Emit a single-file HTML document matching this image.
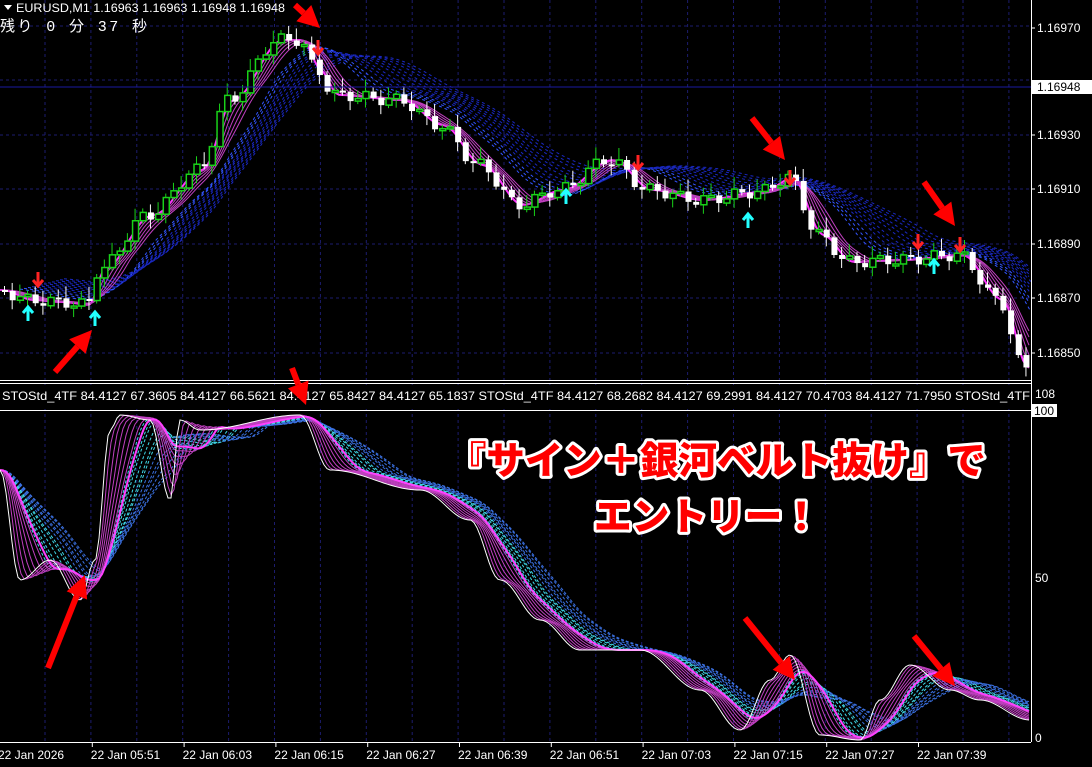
<!DOCTYPE html>
<html><head><meta charset="utf-8">
<style>
html,body{margin:0;padding:0;background:#000;}
svg{display:block}
.ax{font-family:"Liberation Sans",sans-serif;font-size:12px;fill:#fff}
.big{font-family:"Liberation Sans","Noto Sans CJK JP",sans-serif;font-weight:900;font-size:38px;fill:#f00;stroke:#fff;stroke-width:6px;paint-order:stroke;stroke-linejoin:round}
</style></head>
<body>
<svg id="s" width="1092" height="767" xmlns="http://www.w3.org/2000/svg">
<rect width="1092" height="767" fill="#000"/>
<g id="grid" stroke="#1c1c6e" stroke-dasharray="3,3" stroke-width="1"></g>
<g id="top"></g>
<g id="bot"></g>
<line x1="0" y1="87" x2="1031" y2="87" stroke="#1a1aa0" stroke-width="1"/>
<line x1="0" y1="380.5" x2="1031" y2="380.5" stroke="#fff"/>
<line x1="0" y1="383.5" x2="1031" y2="383.5" stroke="#fff"/>
<line x1="0" y1="410.5" x2="1031" y2="410.5" stroke="#fff"/>
<line x1="0" y1="742.5" x2="1031" y2="742.5" stroke="#fff"/>
<line x1="1031.5" y1="0" x2="1031.5" y2="742" stroke="#fff"/>
<g id="ticks" stroke="#fff"></g>
<polygon points="4,5 12,5 8,10" fill="#fff"/>
<text class="ax" x="16" y="12" font-size="13" textLength="269" lengthAdjust="spacingAndGlyphs">EURUSD,M1  1.16963 1.16963 1.16948 1.16948</text>
<text x="0" y="31" fill="#fff" font-size="15" font-family="'Liberation Mono','Noto Sans CJK JP',monospace" textLength="147" lengthAdjust="spacing">残り 0 分 37 秒</text>
<rect x="0" y="385" width="1031" height="24" fill="#000"/>
<text class="ax" x="2" y="400" font-size="13" textLength="1028" lengthAdjust="spacingAndGlyphs">STOStd_4TF 84.4127 67.3605 84.4127 66.5621 84.4127 65.8427 84.4127 65.1837   STOStd_4TF 84.4127 68.2682 84.4127 69.2991 84.4127 70.4703 84.4127 71.7950   STOStd_4TF</text>
<rect x="1032" y="384" width="60" height="26" fill="#000"/>
<text class="ax" x="1035" y="398">108</text>
<rect x="1032" y="404" width="25" height="13" fill="#fff"/>
<text x="1034" y="415" font-size="12" font-family="Liberation Sans" fill="#000">100</text>
<text class="ax" x="1035" y="582">50</text>
<text class="ax" x="1035" y="742">0</text>
<g id="plab"></g>
<rect x="1032" y="80" width="60" height="14" fill="#fff"/>
<text x="1037" y="91" font-size="12" font-family="Liberation Sans" fill="#000">1.16948</text>
<g id="tlab"></g>
<g id="sig"></g>
<g id="arr" fill="#f00" stroke="#f00"></g>
<text class="big" x="448" y="474" textLength="538" lengthAdjust="spacingAndGlyphs">『サイン＋銀河ベルト抜け』で</text>
<text class="big" x="594" y="530" textLength="226" lengthAdjust="spacingAndGlyphs">エントリー！</text>
</svg>
<script>
const NS="http://www.w3.org/2000/svg";
function el(p,t,a){const e=document.createElementNS(NS,t);for(const k in a)e.setAttribute(k,a[k]);p.appendChild(e);return e;}
const G=id=>document.getElementById(id);
for(let x=45;x<1031;x+=45.9)el(G('grid'),'line',{x1:x,y1:0,x2:x,y2:742});
[26,80,135,189,244,298,353].forEach(y=>el(G('grid'),'line',{x1:0,y1:y,x2:1031,y2:y}));
const pl=[[28,'1.16970'],[135,'1.16930'],[189,'1.16910'],[244,'1.16890'],[298,'1.16870'],[353,'1.16850']];
pl.forEach(p=>{el(G('plab'),'text',{class:'ax',x:1037,y:p[0]+4}).textContent=p[1];el(G('ticks'),'line',{x1:1031,y1:p[0],x2:1035,y2:p[0]});});
const tl=['22 Jan 2026','22 Jan 05:51','22 Jan 06:03','22 Jan 06:15','22 Jan 06:27','22 Jan 06:39','22 Jan 06:51','22 Jan 07:03','22 Jan 07:15','22 Jan 07:27','22 Jan 07:39'];
tl.forEach((t,i)=>{const x=i*91.8;el(G('tlab'),'text',{class:'ax',x:i==0?-2:x-1,y:759}).textContent=t;if(i>0)el(G('ticks'),'line',{x1:x+0.5,y1:742,x2:x+0.5,y2:747});});
function interp(pts,x){for(let i=0;i<pts.length-1;i++){if(x>=pts[i][0]&&x<=pts[i+1][0]){const t=(x-pts[i][0])/(pts[i+1][0]-pts[i][0]);const s=(1-Math.cos(t*Math.PI))/2;return pts[i][1]+(pts[i+1][1]-pts[i][1])*s;}}return pts[pts.length-1][1];}
const price=[[0,290],[30,300],[60,302],[88,305],[100,270],[150,215],[200,170],[230,100],[280,40],[300,40],[318,70],[335,95],[400,100],[440,125],[480,165],[520,205],[560,190],[610,160],[650,190],[700,200],[760,192],[790,178],[820,235],[850,262],[900,260],[960,255],[1000,300],[1025,368]];
function lagged(pts,lag,off,x0){const a=[];for(let x=x0||0;x<=1031;x+=3){let s=0,n=0;for(let k=0;k<=lag;k+=3){s+=interp(pts,Math.max(0,x-k));n++;}a.push([x,s/n+off]);}return a;}
function poly(g,arr,st,w,dash){el(g,'polyline',{points:arr.map(p=>p.join(',')).join(' '),fill:'none',stroke:st,'stroke-width':w||1,'stroke-dasharray':dash||'none'});}
const T=G('top');
for(let i=0;i<12;i++){poly(T,lagged(price,60+i*7,-2-i*1.2,20+i*4),i<3?'#3355ff':'#1a28c0',1,'3,3');}
for(let i=0;i<6;i++){poly(T,lagged(price,6+i*6,0),i==0?'#ff33ff':'#c040c0',i==0?2:1);}
let prev=interp(price,0);
for(let i=0;i<134;i++){const x=2+i*7.68;const c=interp(price,x+4)+(Math.sin(i*1.7)*6);const o=prev;prev=c;
 const up=c<o;const top=Math.min(o,c),h=Math.max(2,Math.abs(c-o));
 el(T,'line',{x1:x+2.5,y1:top-4-(i%3)*4,x2:x+2.5,y2:top+h+3+(i%2)*6,stroke:up?'#19d219':'#fff'});
 el(T,'rect',{x:x,y:top,width:6,height:h,fill:up?'#000':'#fff',stroke:up?'#19d219':'#fff','stroke-width':up?1.5:0});}
const sto=[[0,470],[20,580],[50,560],[80,600],[95,560],[110,430],[120,415],[150,420],[170,500],[180,420],[200,430],[300,415],[330,470],[420,490],[470,520],[500,580],[540,620],[580,650],[640,650],[700,690],[740,730],[770,680],[790,655],[820,735],[860,740],[880,700],[910,665],[950,690],[980,700],[1030,720]];
const B=G('bot');
for(let i=0;i<12;i++){poly(B,lagged(sto,40+i*5,0),i<6?'#40d8e8':'#3a70e0',1,'3,2');}
for(let i=0;i<7;i++){poly(B,lagged(sto,6+i*6,0),i==6?'#ff40ff':'#c040c0',i==6?2:1);}
poly(B,lagged(sto,0,0),'#fff',1);
const S=G('sig');
function dn(x,y){el(S,'path',{d:`M${x-5},${y} L${x},${y+6} L${x+5},${y} M${x},${y-8} L${x},${y+6}`,stroke:'#f22',fill:'none','stroke-width':3});}
function upA(x,y){el(S,'path',{d:`M${x-5},${y} L${x},${y-6} L${x+5},${y} M${x},${y+8} L${x},${y-6}`,stroke:'#2ff',fill:'none','stroke-width':3});}
[[38,280],[318,48],[638,163],[790,178],[918,242],[960,245]].forEach(p=>dn(...p));
[[28,313],[95,318],[566,196],[748,220],[934,266]].forEach(p=>upA(...p));
const A=G('arr');
function big(x1,y1,x2,y2){const dx=x2-x1,dy=y2-y1,L=Math.hypot(dx,dy),ux=dx/L,uy=dy/L,px=-uy,py=ux;const hx=x2-ux*22,hy=y2-uy*22;
 el(A,'line',{x1:x1,y1:y1,x2:hx,y2:hy,'stroke-width':6});
 el(A,'polygon',{points:`${x2},${y2} ${hx+px*11},${hy+py*11} ${hx-px*11},${hy-py*11}`,stroke:'none'});}
big(55,372,92,330);big(295,5,320,28);big(752,118,785,160);big(924,182,955,226);
big(48,668,85,575);big(292,368,306,405);big(745,618,795,680);big(914,636,955,686);
</script>
</body></html>
